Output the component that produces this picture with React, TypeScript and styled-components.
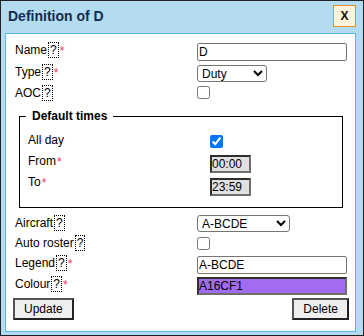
import React from "react";
import styled, { createGlobalStyle } from "styled-components";

const GlobalStyle = createGlobalStyle`
  html, body {
    margin: 0;
    padding: 0;
    background: #fff;
  }
  body {
    font-family: "Liberation Sans", Arial, sans-serif;
    font-size: 12px;
  }
`;

const FONT = `12px "Liberation Sans", Arial, sans-serif`;

const Dialog = styled.div`
  width: 364px;
  height: 336px;
  box-sizing: border-box;
  border: 1px solid #222;
  background: #b3dcf2;
  display: flex;
  flex-direction: column;
  font-family: "Liberation Sans", Arial, sans-serif;
  font-size: 12px;
  color: #000;
`;

const TitleBar = styled.div`
  height: 32px;
  flex-shrink: 0;
  box-sizing: border-box;
  padding: 4px 7px 0 7px;
  display: flex;
  justify-content: space-between;
  align-items: flex-start;
`;

const Title = styled.div`
  margin-top: 3px;
  font-size: 14px;
  font-weight: bold;
  line-height: 16px;
  color: #132c4f;
`;

const CloseButton = styled.button`
  width: 23px;
  height: 22px;
  box-sizing: border-box;
  padding: 0;
  border: 1px solid #e4922a;
  background: #fdf2dc;
  font-family: "Liberation Sans", Arial, sans-serif;
  font-size: 12px;
  font-weight: bold;
  line-height: 20px;
  color: #111;
  cursor: pointer;
`;

const Panel = styled.div`
  flex: 1;
  margin: 0 7px 3px 4px;
  box-sizing: border-box;
  border: 1px solid #5cb5e6;
  background: #fff;
  padding: 8px 8px 0 9px;
`;

const Row = styled.div<{ $h: number }>`
  display: grid;
  grid-template-columns: 182px 1fr;
  align-items: start;
  height: ${(p) => p.$h}px;
`;

const Label = styled.div`
  line-height: 16px;
  white-space: nowrap;
`;

const Cell = styled.div<{ $off?: number }>`
  display: flex;
  margin-top: ${(p) => p.$off ?? 0}px;
`;

const Help = styled.span`
  display: inline-block;
  vertical-align: top;
  margin-left: 1px;
  padding: 0 1px;
  border: 1px dotted #000;
  line-height: 14px;
  cursor: help;
`;

// sits a touch lower than the label text, like the original
const Req = styled.span`
  vertical-align: top;
  margin-left: 1px;
  color: #ee3366;
  font-size: 12px;
  line-height: 19px;
`;

const Group = styled.fieldset`
  margin: 0 4px 7px;
  padding: 9px 0 11px 8px;
  border: 1px solid #000;
  min-width: 0;
`;

const GroupTitle = styled.legend`
  margin-left: -2px;
  padding: 0 6px;
  font-weight: bold;
  line-height: 14px;
`;

const TextInput = styled.input`
  width: 150px;
  height: 18px;
  box-sizing: border-box;
  margin: 0;
  padding: 0 1px;
  border: 1px solid #767676;
  border-radius: 2px;
  background: #fff;
  font: ${FONT};
  color: #000;
  outline: none;
`;

const SunkenInput = styled.input<{ $w: number; $bg: string }>`
  width: ${(p) => p.$w}px;
  height: 18px;
  box-sizing: border-box;
  margin: 0;
  padding: 0;
  border: 2px solid;
  border-color: #2e2e2e #6e6e6e #6e6e6e #2e2e2e;
  background: ${(p) => p.$bg};
  font: ${FONT};
  color: #000;
  outline: none;
`;

const Select = styled.select<{ $w: number }>`
  width: ${(p) => p.$w}px;
  height: 17px;
  box-sizing: border-box;
  margin: 0;
  border: 1px solid #767676;
  border-radius: 3px;
  background: #fff;
  font: ${FONT};
  color: #000;
`;

const Check = styled.input.attrs({ type: "checkbox" })`
  width: 13px;
  height: 13px;
  margin: 0;
`;

const ButtonBar = styled.div`
  display: flex;
  justify-content: space-between;
  margin: 1px -2px 0;
`;

const Button = styled.button`
  height: 22px;
  box-sizing: border-box;
  padding: 0 9px;
  border: 2px solid;
  border-color: #555 #222 #222 #555;
  background: #efefef;
  font: ${FONT};
  color: #000;
  cursor: pointer;
`;

const FieldLabel: React.FC<{ text: string; help?: boolean; req?: boolean }> = ({
  text,
  help,
  req,
}) => (
  <Label>
    {text}
    {help && <Help>?</Help>}
    {req && <Req>*</Req>}
  </Label>
);

export default function App() {
  return (
    <>
      <GlobalStyle />
      <Dialog>
        <TitleBar>
          <Title>Definition of D</Title>
          <CloseButton>X</CloseButton>
        </TitleBar>
        <Panel>
          <Row $h={22}>
            <FieldLabel text="Name" help req />
            <Cell $off={1}>
              <TextInput defaultValue="D" />
            </Cell>
          </Row>
          <Row $h={21}>
            <FieldLabel text="Type" help req />
            <Cell $off={1}>
              <Select $w={70} defaultValue="Duty">
                <option>Duty</option>
                <option>Standby</option>
                <option>Off</option>
              </Select>
            </Cell>
          </Row>
          <Row $h={24}>
            <FieldLabel text="AOC" help />
            <Cell $off={1}>
              <Check />
            </Cell>
          </Row>

          <Group>
            <GroupTitle>Default times</GroupTitle>
            <Row $h={21}>
              <FieldLabel text="All day" />
              <Cell $off={3}>
                <Check defaultChecked />
              </Cell>
            </Row>
            <Row $h={21}>
              <FieldLabel text="From" req />
              <Cell $off={2}>
                <SunkenInput $w={41} $bg="#e0e0e0" defaultValue="00:00" readOnly />
              </Cell>
            </Row>
            <Row $h={22}>
              <FieldLabel text="To" req />
              <Cell $off={4}>
                <SunkenInput $w={41} $bg="#e0e0e0" defaultValue="23:59" readOnly />
              </Cell>
            </Row>
          </Group>

          <Row $h={20}>
            <FieldLabel text="Aircraft" help />
            <Cell>
              <Select $w={93} defaultValue="A-BCDE">
                <option>A-BCDE</option>
                <option>A-FGHI</option>
              </Select>
            </Cell>
          </Row>
          <Row $h={20}>
            <FieldLabel text="Auto roster" help />
            <Cell $off={2}>
              <Check />
            </Cell>
          </Row>
          <Row $h={21}>
            <FieldLabel text="Legend" help req />
            <Cell $off={1}>
              <TextInput defaultValue="A-BCDE" />
            </Cell>
          </Row>
          <Row $h={21}>
            <FieldLabel text="Colour" help req />
            <Cell $off={1}>
              <SunkenInput $w={150} $bg="#a16cf1" defaultValue="A16CF1" />
            </Cell>
          </Row>

          <ButtonBar>
            <Button>Update</Button>
            <Button>Delete</Button>
          </ButtonBar>
        </Panel>
      </Dialog>
    </>
  );
}
